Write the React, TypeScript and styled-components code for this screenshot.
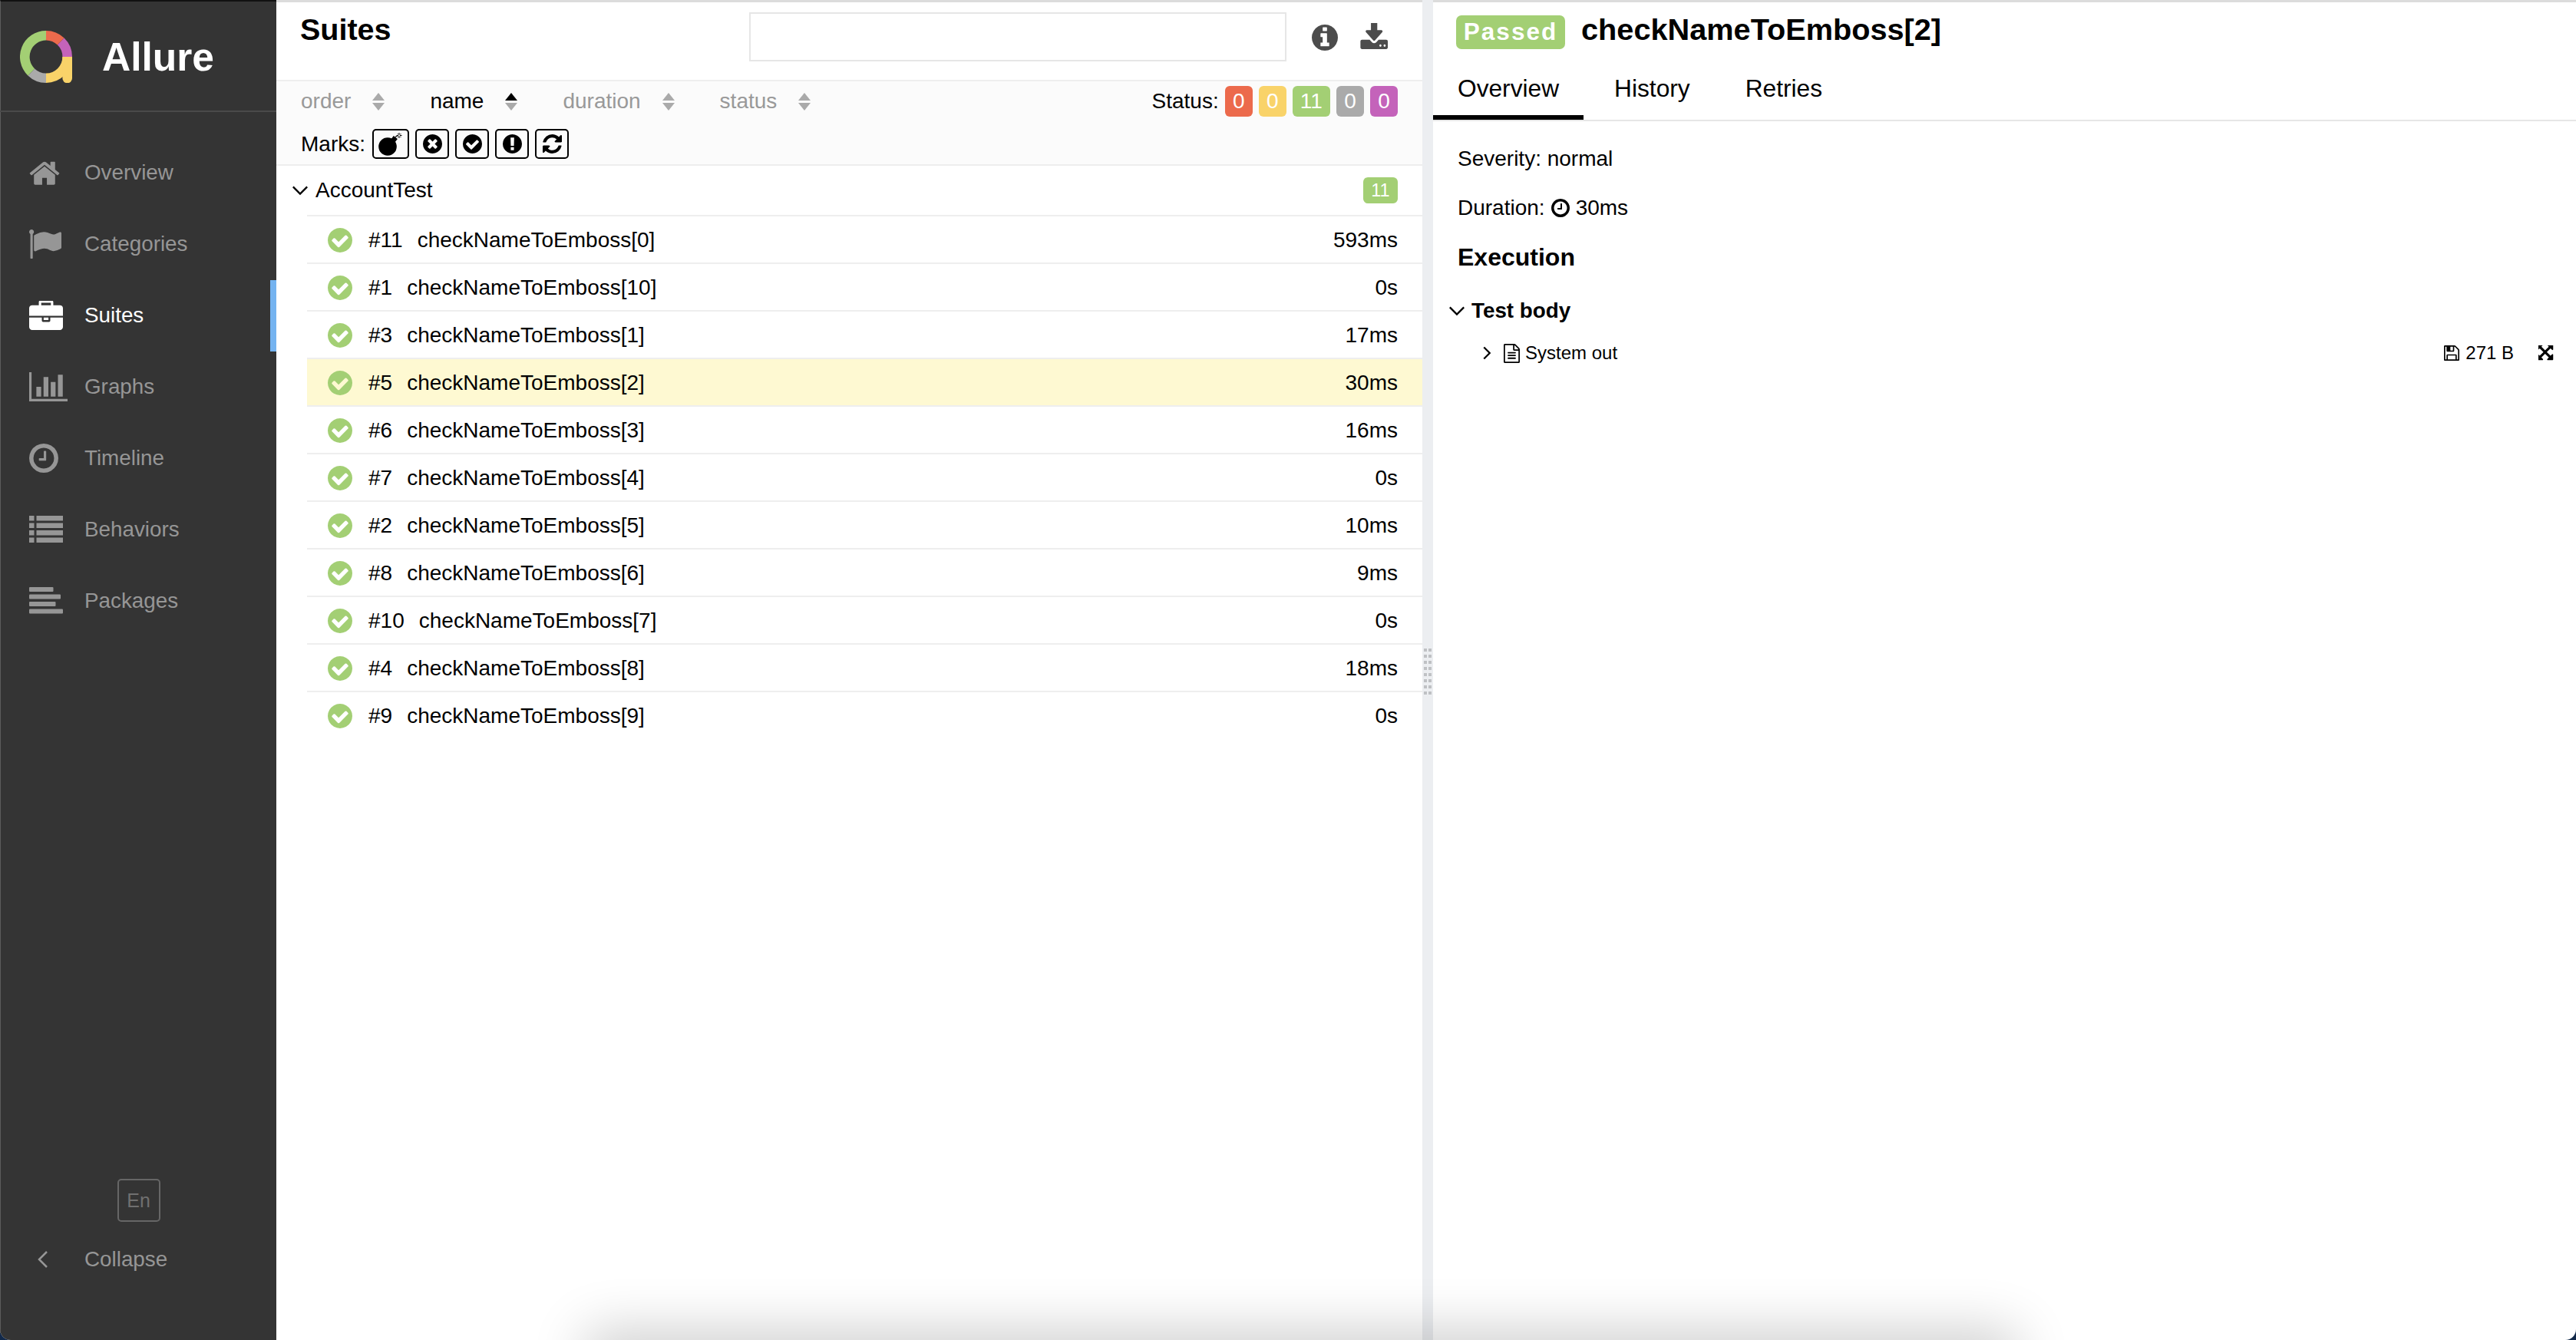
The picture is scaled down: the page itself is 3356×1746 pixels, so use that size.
import React from "react";
import styled, { createGlobalStyle } from "styled-components";

const GlobalStyle = createGlobalStyle`
  html, body {
    margin: 0;
    height: 100%;
    background: #12294a;
    overflow: hidden;
  }
  * {
    box-sizing: border-box;
  }
  #root {
    height: 100%;
  }
`;

const colors = {
  failed: "#ec6a4c",
  broken: "#f9d369",
  passed: "#a3cf74",
  skipped: "#aaaaaa",
  unknown: "#c463ba",
};

// font awesome 4 glyphs, 1792 grid
const GLYPHS: Record<string, { box: string; d: string }> = {
  home: {
    box: "60 180 1672 1370",
    d: "M1472 992v480q0 26-19 45t-45 19h-384v-384h-256v384h-384q-26 0-45-19t-19-45v-480q0-1 .5-3t.5-3l575-474 575 474q1 2 1 6zm223-69l-62 74q-8 9-21 11h-3q-13 0-21-7l-692-577-692 577q-12 8-24 7-13-2-21-11l-62-74q-8-10-7-23.5t11-21.5l719-599q32-26 76-26t76 26l244 204v-195q0-14 9-23t23-9h192q14 0 23 9t9 23v408l219 182q10 8 11 21.5t-7 23.5z",
  },
  flag: {
    box: "64 128 1728 1536",
    d: "M320 256q0 72-64 110v1266q0 13-9.5 22.5t-22.5 9.5h-64q-13 0-22.5-9.5t-9.5-22.5v-1266q-64-38-64-110 0-53 37.5-90.5t90.5-37.5 90.5 37.5 37.5 90.5zm1472 64v763q0 25-12.5 38.5t-39.5 27.5q-215 116-369 116-61 0-123.5-22t-108.5-48-115.5-48-142.5-22q-192 0-464 146-17 9-33 9-26 0-45-19t-19-45v-742q0-32 31-55 21-14 79-43 236-120 421-120 107 0 200 29t219 88q38 19 88 19 54 0 117.5-21t110-47 88-47 54.5-21q26 0 45 19t19 45z",
  },
  briefcase: {
    box: "0 32 1792 1504",
    d: "M640 256h512v-128h-512v128zm1152 640v480q0 66-47 113t-113 47h-1472q-66 0-113-47t-47-113v-480h672v160q0 26 19 45t45 19h320q26 0 45-19t19-45v-160h672zm-768 0v128h-256v-128h256zm768-480v384h-1792v-384q0-66 47-113t113-47h352v-160q0-40 28-68t68-28h576q40 0 68 28t28 68v160h352q66 0 113 47t47 113z",
  },
  chart: {
    box: "0 128 2048 1536",
    d: "M640 896v512h-256v-512h256zm384-512v1024h-256v-1024h256zm1024 1152v128h-2048v-1536h128v1408h1920zm-640-896v768h-256v-768h256zm384-384v1152h-256v-1152h256z",
  },
  clock: {
    box: "128 128 1536 1536",
    d: "M1024 544v448q0 14-9 23t-23 9h-320q-14 0-23-9t-9-23v-64q0-14 9-23t23-9h224v-352q0-14 9-23t23-9h64q14 0 23 9t9 23zm416 352q0-148-73-273t-198-198-273-73-273 73-198 198-73 273 73 273 198 198 273 73 273-73 198-198 73-273zm224 0q0 209-103 385.5t-279.5 279.5-385.5 103-385.5-103-279.5-279.5-103-385.5 103-385.5 279.5-279.5 385.5-103 385.5 103 279.5 279.5 103 385.5z",
  },
  check: {
    box: "128 128 1536 1536",
    d: "M1412 734q0-28-18-46l-91-90q-19-19-45-19t-45 19l-408 407-226-226q-19-19-45-19t-45 19l-91 90q-18 18-18 46 0 27 18 45l362 362q19 19 45 19 27 0 46-19l543-543q18-18 18-45zm252 162q0 209-103 385.5t-279.5 279.5-385.5 103-385.5-103-279.5-279.5-103-385.5 103-385.5 279.5-279.5 385.5-103 385.5 103 279.5 279.5 103 385.5z",
  },
  times: {
    box: "128 128 1536 1536",
    d: "M1277 1122q0-26-19-45l-181-181 181-181q19-19 19-45 0-27-19-46l-90-90q-19-19-46-19-26 0-45 19l-181 181-181-181q-19-19-45-19-27 0-46 19l-90 90q-19 19-19 46 0 26 19 45l181 181-181 181q-19 19-19 45 0 27 19 46l90 90q19 19 46 19 26 0 45-19l181-181 181 181q19 19 45 19 27 0 46-19l90-90q19-19 19-46zm387-226q0 209-103 385.5t-279.5 279.5-385.5 103-385.5-103-279.5-279.5-103-385.5 103-385.5 279.5-279.5 385.5-103 385.5 103 279.5 279.5 103 385.5z",
  },
  exclamation: {
    box: "128 128 1536 1536",
    d: "M896 128q209 0 385.5 103t279.5 279.5 103 385.5-103 385.5-279.5 279.5-385.5 103-385.5-103-279.5-279.5-103-385.5 103-385.5 279.5-279.5 385.5-103zm128 1247v-190q0-14-9-23.5t-22-9.5h-192q-13 0-23 10t-10 23v190q0 13 10 23t23 10h192q13 0 22-9.5t9-23.5zm-2-344l18-621q0-12-10-18-10-8-24-8h-220q-14 0-24 8-10 6-10 18l17 621q0 10 10 17.5t24 7.5h185q14 0 23.5-7.5t10.5-17.5z",
  },
  refresh: {
    box: "128 128 1536 1536",
    d: "M1639 1056q0 5-1 7-64 268-268 434.5t-478 166.5q-146 0-282.5-55t-243.5-157l-129 129q-19 19-45 19t-45-19-19-45v-448q0-26 19-45t45-19h448q26 0 45 19t19 45-19 45l-137 137q71 66 161 102t187 36q134 0 250-65t186-179q11-17 53-117 8-23 30-23h192q13 0 22.5 9.5t9.5 22.5zm25-800v448q0 26-19 45t-45 19h-448q-26 0-45-19t-19-45 19-45l138-138q-148-137-349-137-134 0-250 65t-186 179q-11 17-53 117-8 23-30 23h-199q-13 0-22.5-9.5t-9.5-22.5v-7q65-268 270-434.5t480-166.5q146 0 284 55.5t245 156.5l130-129q19-19 45-19t45 19 19 45z",
  },
  info: {
    box: "128 128 1536 1536",
    d: "M1152 1376v-160q0-14-9-23t-23-9h-96v-512q0-14-9-23t-23-9h-320q-14 0-23 9t-9 23v160q0 14 9 23t23 9h96v320h-96q-14 0-23 9t-9 23v160q0 14 9 23t23 9h448q14 0 23-9t9-23zm-128-896v-160q0-14-9-23t-23-9h-192q-14 0-23 9t-9 23v160q0 14 9 23t23 9h192q14 0 23-9t9-23zm640 416q0 209-103 385.5t-279.5 279.5-385.5 103-385.5-103-279.5-279.5-103-385.5 103-385.5 279.5-279.5 385.5-103 385.5 103 279.5 279.5 103 385.5z",
  },
  download: {
    box: "0 128 1728 1408",
    d: "M1344 1344q0-26-19-45t-45-19-45 19-19 45 19 45 45 19 45-19 19-45zm256 0q0-26-19-45t-45-19-45 19-19 45 19 45 45 19 45-19 19-45zm128-224v320q0 40-28 68t-68 28h-1472q-40 0-68-28t-28-68v-320q0-40 28-68t68-28h465l135 136q58 56 136 56t136-56l136-136h464q40 0 68 28t28 68zm-325-569q17 41-14 70l-448 448q-18 19-45 19t-45-19l-448-448q-31-29-14-70 17-39 59-39h256v-448q0-26 19-45t45-19h256q26 0 45 19t19 45v448h256q42 0 59 39z",
  },
  floppy: {
    box: "128 128 1536 1536",
    d: "M512 1536h768v-384h-768v384zm896 0h128v-896q0-14-10-38.5t-20-34.5l-281-281q-10-10-34-20t-39-10v416q0 40-28 68t-68 28h-576q-40 0-68-28t-28-68v-416h-128v1280h128v-416q0-40 28-68t68-28h832q40 0 68 28t28 68v416zm-384-928v-320q0-13-9.5-22.5t-22.5-9.5h-192q-13 0-22.5 9.5t-9.5 22.5v320q0 13 9.5 22.5t22.5 9.5h192q13 0 22.5-9.5t9.5-22.5zm640 32v928q0 40-28 68t-68 28h-1344q-40 0-68-28t-28-68v-1344q0-40 28-68t68-28h928q40 0 88 20t76 48l280 280q28 28 48 76t20 88z",
  },
  expand: {
    box: "128 128 1536 1536",
    d: "M1283 413l-355 355 355 355 144-144q29-31 70-14 39 17 39 59v448q0 26-19 45t-45 19h-448q-42 0-59-40-17-39 14-69l144-144-355-355-355 355 144 144q31 30 14 69-17 40-59 40h-448q-26 0-45-19t-19-45v-448q0-42 40-59 39-17 69 14l144 144 355-355-355-355-144 144q-19 19-45 19-12 0-24-5-40-17-40-59v-448q0-26 19-45t45-19h448q42 0 59 40 17 39-14 69l-144 144 355 355 355-355-144-144q-31-30-14-69 17-40 59-40h448q26 0 45 19t19 45v448q0 42-39 59-13 5-25 5-26 0-45-19z",
  },
  file: {
    box: "128 0 1536 1792",
    d: "M1596 380q28 28 48 76t20 88v1152q0 40-28 68t-68 28h-1344q-40 0-68-28t-28-68v-1600q0-40 28-68t68-28h896q40 0 88 20t76 48zm-444-244v376h376q-10-29-22-41l-313-313q-12-12-41-22zm384 1528v-1024h-416q-40 0-68-28t-28-68v-416h-768v1536h1280zm-1024-864q0-14 9-23t23-9h704q14 0 23 9t9 23v64q0 14-9 23t-23 9h-704q-14 0-23-9t-9-23v-64zm736 224q14 0 23 9t9 23v64q0 14-9 23t-23 9h-704q-14 0-23-9t-9-23v-64q0-14 9-23t23-9h704zm0 256q14 0 23 9t9 23v64q0 14-9 23t-23 9h-704q-14 0-23-9t-9-23v-64q0-14 9-23t23-9h704z",
  },
};

const Glyph = ({ name, w, h }: { name: string; w: number; h: number }) => (
  <svg
    width={w}
    height={h}
    viewBox={GLYPHS[name].box}
    preserveAspectRatio="none"
    fill="currentColor"
    style={{ display: "block", flex: "none" }}
  >
    <path d={GLYPHS[name].d} />
  </svg>
);

const Logo = () => (
  <svg width="68" height="68" viewBox="0 0 68 68" fill="none" strokeWidth="12.6">
    <path d="M34 6.3A27.7 27.7 0 0 1 53.25 14.08" stroke={colors.failed} />
    <path d="M53.25 14.08A27.7 27.7 0 0 1 61.7 34" stroke={colors.unknown} />
    <path d="M61.7 34A27.7 27.7 0 0 1 34 61.7" stroke={colors.broken} />
    <path d="M34 61.7A27.7 27.7 0 0 1 14.75 53.92" stroke={colors.skipped} />
    <path d="M14.75 53.92A27.7 27.7 0 0 1 34 6.3" stroke={colors.passed} />
    <path d="M55.4 34H68V62A6.3 6.3 0 0 1 55.4 62Z" fill={colors.broken} />
  </svg>
);

const ListIcon = () => (
  <svg width="44" height="35" viewBox="0 0 44 35" fill="#969696" style={{ display: "block" }}>
    {[0, 9.5, 19, 28.5].map((y) => (
      <g key={y}>
        <rect x="0" y={y} width="6.5" height="6.5" />
        <rect x="9.5" y={y} width="34.5" height="6.5" />
      </g>
    ))}
  </svg>
);

const AlignIcon = () => (
  <svg width="44" height="35" viewBox="0 0 44 35" fill="#969696" style={{ display: "block" }}>
    <rect x="0" y="0" width="31.5" height="6" rx="1" />
    <rect x="0" y="9.5" width="41" height="6" rx="1" />
    <rect x="0" y="19" width="34.5" height="6" rx="1" />
    <rect x="0" y="28.5" width="44" height="6" rx="1" />
  </svg>
);

const BombIcon = () => (
  <svg width="32" height="30" viewBox="0 0 32 30" style={{ display: "block" }}>
    <circle cx="12" cy="18" r="11.8" fill="#000" />
    <rect x="17" y="5" width="6.5" height="7" transform="rotate(38 20 8.5)" fill="#000" />
    <path d="M22 5.5L25 3.5" stroke="#000" strokeWidth="1.2" fill="none" />
    <path d="M27 0V2.500M27 4.500V7M23.800 3.500H26M28 3.500H30.500M25 1.200L26.300 2.600M28 4.500L29.300 5.800M29.300 1.200L28 2.600M26.300 4.500L25 5.800" stroke="#000" strokeWidth="1" fill="none" />
  </svg>
);

const Chevron = ({ dir, size, weight }: { dir: "down" | "right" | "left"; size: number; weight: number }) => {
  const points = dir === "down" ? "2,7 12,17 22,7" : dir === "right" ? "7,2 17,12 7,22" : "17,2 7,12 17,22";
  return (
    <svg width={size} height={size} viewBox="0 0 24 24" fill="none" stroke="currentColor" strokeWidth={weight} style={{ display: "block", flex: "none" }}>
      <polyline points={points} />
    </svg>
  );
};

const Page = styled.div`
  display: flex;
  height: 100%;
  font-family: "Liberation Sans", Arial, sans-serif;
  font-size: 28px;
  color: #000;
  background: #fff;
  border-radius: 0 0 14px 14px;
  overflow: hidden;
  position: relative;
`;

const Sidebar = styled.aside`
  flex: none;
  width: 360px;
  display: flex;
  flex-direction: column;
  background: #343434;
  border-top: 2px solid #111;
  border-left: 1px solid #5c5c5c;
  color: #969696;
  font-size: 27.8px;
`;

const Brand = styled.div`
  flex: none;
  height: 144px;
  margin-left: -1px;
  border-bottom: 2px solid #4a4a4a;
  display: flex;
  align-items: center;
  gap: 39px;
  padding: 2px 0 0 26px;
`;

const BrandName = styled.span`
  color: #fff;
  font-size: 51.5px;
  font-weight: 700;
`;

const Nav = styled.nav`
  flex: 1;
  padding-top: 33px;
`;

const NavItem = styled.div<{ $active?: boolean }>`
  height: 92.9px;
  display: flex;
  align-items: center;
  margin-left: -1px;
  border-right: 8px solid ${(p) => (p.$active ? "#74b3f0" : "transparent")};
  color: ${(p) => (p.$active ? "#fff" : "#969696")};
`;

const NavIcon = styled.span`
  flex: none;
  width: 110px;
  padding-left: 38px;
`;

const Footer = styled.div`
  flex: none;
  height: 210px;
  display: flex;
  flex-direction: column;
`;

const LangButton = styled.div`
  align-self: center;
  width: 56px;
  height: 56px;
  border: 2px solid #666;
  border-radius: 5px;
  display: flex;
  align-items: center;
  justify-content: center;
  color: #707070;
  font-size: 25px;
`;

const CollapseRow = styled.div`
  display: flex;
  align-items: center;
  margin-top: 29px;
  height: 40px;
`;

const CollapseIcon = styled.span`
  flex: none;
  width: 109px;
  padding-left: 43px;
`;

const TestPane = styled.main`
  flex: none;
  width: 1493px;
  border-top: 3px solid #dcdcdc;
  display: flex;
  flex-direction: column;
`;

const PaneHeader = styled.header`
  flex: none;
  height: 101px;
  display: flex;
  align-items: flex-start;
  padding: 0 45px 0 31px;
`;

const PaneTitle = styled.h2`
  margin: 13px auto 0 0;
  font-size: 39.5px;
  line-height: 44px;
  font-weight: 700;
`;

const SearchInput = styled.div`
  width: 700px;
  height: 64px;
  margin-top: 13px;
  border: 2px solid #e6e6e6;
  background: #fff;
`;

const HeaderIcon = styled.span<{ $gap: number; $top: number }>`
  margin-left: ${(p) => p.$gap}px;
  margin-top: ${(p) => p.$top}px;
  color: #4c4c4c;
`;

const Toolbar = styled.div`
  flex: none;
  background: #fbfbfb;
  border-top: 2px solid #eeeeee;
  border-bottom: 2px solid #eeeeee;
  padding: 6px 32px 7px 32px;
  display: flex;
  flex-direction: column;
  gap: 16px;
`;

const ToolbarRow = styled.div`
  height: 40px;
  display: flex;
  align-items: center;
`;

const MarksRow = styled(ToolbarRow)`
  height: 39px;
  gap: 8px;
`;

const SortItem = styled.div<{ $active?: boolean }>`
  display: flex;
  align-items: center;
  gap: 28px;
  margin-right: 59px;
  color: ${(p) => (p.$active ? "#000" : "#999")};
`;

const SortArrows = styled.span<{ $active?: boolean }>`
  width: 16px;
  display: flex;
  flex-direction: column;
  gap: 3px;
  &::before,
  &::after {
    content: "";
    border-left: 8px solid transparent;
    border-right: 8px solid transparent;
  }
  &::before {
    border-bottom: 10px solid ${(p) => (p.$active ? "#000" : "#aaa")};
  }
  &::after {
    border-top: 10px solid #aaa;
  }
`;

const StatusFilter = styled.div`
  margin-left: auto;
  display: flex;
  align-items: center;
  gap: 8px;
`;

const StatusBadge = styled.span<{ $color: string }>`
  height: 40px;
  padding: 0 10.2px;
  border-radius: 6px;
  background: ${(p) => p.$color};
  color: #fff;
  line-height: 40px;
`;

const MarksLabel = styled.span`
  margin-right: 1px;
`;

const MarkButton = styled.span<{ $wide?: boolean }>`
  width: ${(p) => (p.$wide ? 48 : 44)}px;
  height: 39px;
  border: 2px solid #000;
  border-radius: 5px;
  display: flex;
  align-items: center;
  justify-content: center;
`;

const GroupRow = styled.div`
  flex: none;
  height: 64px;
  display: flex;
  align-items: center;
  padding: 0 32px 0 20px;
`;

const GroupName = styled.span`
  flex: 1;
  margin-left: 9px;
`;

const CountBadge = styled.span`
  width: 45px;
  height: 34px;
  border-radius: 6px;
  background: ${colors.passed};
  color: #fff;
  font-size: 23.5px;
  line-height: 34px;
  text-align: center;
`;

const TestRows = styled.div`
  margin-left: 40px;
`;

const TestRow = styled.div<{ $selected?: boolean }>`
  height: 62px;
  border-top: 2px solid #eeeeee;
  display: flex;
  align-items: center;
  padding: 1px 32px 0 27px;
  background: ${(p) => (p.$selected ? "#fef9d2" : "transparent")};
`;

const StatusIcon = styled.span`
  color: ${colors.passed};
  margin-right: 21px;
`;

const RowOrder = styled.span`
  margin-right: 19px;
`;

const RowName = styled.span`
  flex: 1;
`;

const Gutter = styled.div`
  flex: none;
  width: 14px;
  background: #eceef1;
  display: flex;
  align-items: center;
  justify-content: center;
`;

const GripDots = styled.div`
  width: 10px;
  height: 60px;
  margin-top: 4px;
  background: linear-gradient(90deg, #bfc1c4 4px, transparent 4px) 0 0 / 6px 100%;
  mask: linear-gradient(#000 4px, transparent 4px) 0 0 / 100% 8px;
`;

const DetailPane = styled.section`
  flex: 1;
  min-width: 0;
  border-top: 3px solid #dcdcdc;
  display: flex;
  flex-direction: column;
`;

const DetailTitleRow = styled.div`
  flex: none;
  height: 71px;
  display: flex;
  align-items: flex-start;
  padding: 17px 0 0 30px;
`;

const PassedTag = styled.span`
  height: 44px;
  width: 142px;
  border-radius: 7px;
  background: ${colors.passed};
  color: #fff;
  font-size: 31.5px;
  font-weight: 700;
  line-height: 42px;
  letter-spacing: 2px;
  text-align: center;
`;

const DetailTitle = styled.h2`
  margin: 0 0 0 21px;
  font-size: 39.7px;
  line-height: 36px;
  font-weight: 700;
`;

const Tabs = styled.div`
  flex: none;
  display: flex;
  border-bottom: 2px solid #e6e6e6;
`;

const Tab = styled.div<{ $active?: boolean }>`
  height: 82px;
  padding: 6px 32px 0;
  margin-right: 8px;
  font-size: 31.7px;
  line-height: 70px;
  border-bottom: 6px solid ${(p) => (p.$active ? "#000" : "transparent")};
`;

const DetailBody = styled.div`
  padding: 31px 28px 0 20px;
`;

const MetaLine = styled.div`
  height: 36px;
  margin: 0 0 28px 12px;
  display: flex;
  align-items: center;
  gap: 8px;
`;

const SectionTitle = styled.h3`
  margin: -1px 0 33px 12px;
  font-size: 32px;
  line-height: 38px;
  font-weight: 700;
`;

const StepHead = styled.div`
  height: 36px;
  display: flex;
  align-items: center;
  gap: 8px;
  font-weight: 700;
  font-size: 27.8px;
`;

const AttachmentRow = styled.div`
  height: 36px;
  margin-top: 19px;
  padding-left: 41px;
  display: flex;
  align-items: center;
  font-size: 24px;
`;

const AttachmentName = styled.span`
  flex: 1;
  margin-left: 7px;
`;

const AttachmentIcon = styled.span`
  margin-left: 13px;
`;

const AttachmentSize = styled.span`
  margin: 0 32px 0 8px;
`;

const BottomShadow = styled.div`
  position: absolute;
  left: 775px;
  width: 1840px;
  bottom: -50px;
  height: 50px;
  box-shadow: 0 0 70px 12px rgba(0, 0, 0, 0.2);
  pointer-events: none;
`;

const navItems = [
  { label: "Overview", icon: <Glyph name="home" w={40} h={32} /> },
  { label: "Categories", icon: <Glyph name="flag" w={42} h={38} /> },
  { label: "Suites", icon: <Glyph name="briefcase" w={44} h={38} />, active: true },
  { label: "Graphs", icon: <Glyph name="chart" w={50} h={38} /> },
  { label: "Timeline", icon: <Glyph name="clock" w={38} h={38} /> },
  { label: "Behaviors", icon: <ListIcon /> },
  { label: "Packages", icon: <AlignIcon /> },
];

const sorters = [
  { label: "order" },
  { label: "name", active: true },
  { label: "duration" },
  { label: "status" },
];

const statuses = [
  { n: 0, color: colors.failed },
  { n: 0, color: colors.broken },
  { n: 11, color: colors.passed },
  { n: 0, color: colors.skipped },
  { n: 0, color: colors.unknown },
];

const tests = [
  { order: 11, idx: 0, time: "593ms" },
  { order: 1, idx: 10, time: "0s" },
  { order: 3, idx: 1, time: "17ms" },
  { order: 5, idx: 2, time: "30ms", selected: true },
  { order: 6, idx: 3, time: "16ms" },
  { order: 7, idx: 4, time: "0s" },
  { order: 2, idx: 5, time: "10ms" },
  { order: 8, idx: 6, time: "9ms" },
  { order: 10, idx: 7, time: "0s" },
  { order: 4, idx: 8, time: "18ms" },
  { order: 9, idx: 9, time: "0s" },
];

export default function App() {
  return (
    <Page>
      <GlobalStyle />
      <Sidebar>
        <Brand>
          <Logo />
          <BrandName>Allure</BrandName>
        </Brand>
        <Nav>
          {navItems.map((item) => (
            <NavItem key={item.label} $active={item.active}>
              <NavIcon>{item.icon}</NavIcon>
              {item.label}
            </NavItem>
          ))}
        </Nav>
        <Footer>
          <LangButton>En</LangButton>
          <CollapseRow>
            <CollapseIcon>
              <Chevron dir="left" size={24} weight={2.5} />
            </CollapseIcon>
            Collapse
          </CollapseRow>
        </Footer>
      </Sidebar>

      <TestPane>
        <PaneHeader>
          <PaneTitle>Suites</PaneTitle>
          <SearchInput />
          <HeaderIcon $gap={33} $top={29}>
            <Glyph name="info" w={34} h={34} />
          </HeaderIcon>
          <HeaderIcon $gap={28} $top={27}>
            <Glyph name="download" w={37} h={34} />
          </HeaderIcon>
        </PaneHeader>
        <Toolbar>
          <ToolbarRow>
            {sorters.map((s) => (
              <SortItem key={s.label} $active={s.active}>
                {s.label}
                <SortArrows $active={s.active} />
              </SortItem>
            ))}
            <StatusFilter>
              Status:
              {statuses.map((s, i) => (
                <StatusBadge key={i} $color={s.color}>
                  {s.n}
                </StatusBadge>
              ))}
            </StatusFilter>
          </ToolbarRow>
          <MarksRow>
            <MarksLabel>Marks:</MarksLabel>
            <MarkButton $wide>
              <BombIcon />
            </MarkButton>
            <MarkButton>
              <Glyph name="times" w={25} h={25} />
            </MarkButton>
            <MarkButton>
              <Glyph name="check" w={25} h={25} />
            </MarkButton>
            <MarkButton>
              <Glyph name="exclamation" w={25} h={25} />
            </MarkButton>
            <MarkButton>
              <Glyph name="refresh" w={25} h={25} />
            </MarkButton>
          </MarksRow>
        </Toolbar>
        <GroupRow>
          <Chevron dir="down" size={22} weight={2.5} />
          <GroupName>AccountTest</GroupName>
          <CountBadge>11</CountBadge>
        </GroupRow>
        <TestRows>
          {tests.map((t) => (
            <TestRow key={t.idx} $selected={t.selected}>
              <StatusIcon>
                <Glyph name="check" w={32} h={32} />
              </StatusIcon>
              <RowOrder>#{t.order}</RowOrder>
              <RowName>checkNameToEmboss[{t.idx}]</RowName>
              {t.time}
            </TestRow>
          ))}
        </TestRows>
      </TestPane>

      <Gutter>
        <GripDots />
      </Gutter>

      <DetailPane>
        <DetailTitleRow>
          <PassedTag>Passed</PassedTag>
          <DetailTitle>checkNameToEmboss[2]</DetailTitle>
        </DetailTitleRow>
        <Tabs>
          <Tab $active>Overview</Tab>
          <Tab>History</Tab>
          <Tab>Retries</Tab>
        </Tabs>
        <DetailBody>
          <MetaLine>Severity: normal</MetaLine>
          <MetaLine>
            Duration:
            <Glyph name="clock" w={24} h={24} />
            30ms
          </MetaLine>
          <SectionTitle>Execution</SectionTitle>
          <StepHead>
            <Chevron dir="down" size={22} weight={2.5} />
            Test body
          </StepHead>
          <AttachmentRow>
            <Chevron dir="right" size={18} weight={3} />
            <AttachmentIcon>
              <Glyph name="file" w={21} h={25} />
            </AttachmentIcon>
            <AttachmentName>System out</AttachmentName>
            <Glyph name="floppy" w={20} h={20} />
            <AttachmentSize>271 B</AttachmentSize>
            <Glyph name="expand" w={21} h={21} />
          </AttachmentRow>
        </DetailBody>
      </DetailPane>
      <BottomShadow />
    </Page>
  );
}
